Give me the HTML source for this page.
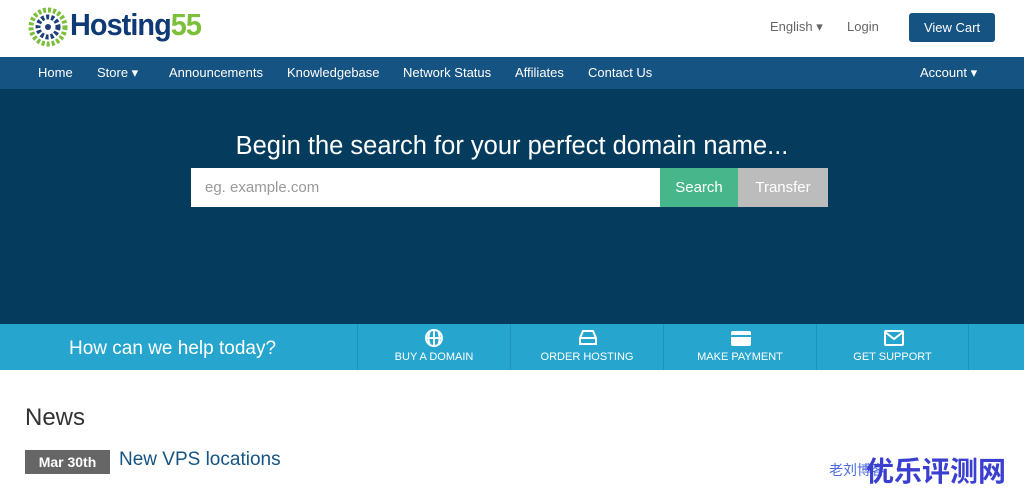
<!DOCTYPE html>
<html><head><meta charset="utf-8"><style>
*{margin:0;padding:0;box-sizing:border-box}
body{width:1024px;height:497px;overflow:hidden;background:#fff;font-family:"Liberation Sans",Arial,sans-serif;position:relative}
.top{height:57px;position:relative}
.nav{position:absolute;top:57px;left:0;width:1024px;height:32px;background:#155383;color:#fff;font-size:13px}
.nav span{position:absolute;top:8px}
.hero{position:absolute;top:89px;left:0;width:1024px;height:235px;background:#053c5e}
.help{position:absolute;top:324px;left:0;width:1024px;height:46px;background:#26a5ce;color:#fff}
.cell{position:absolute;top:0;height:46px;width:153px;border-left:1px solid #1e93ba;text-align:center;font-size:11px}
.cell .l{position:absolute;top:27px;width:100%}
.cell svg{position:absolute;top:4px;left:66px}
</style></head><body>
<div class="top">
<svg style="position:absolute;left:28px;top:7px" width="40" height="40" viewBox="0 0 40 40"><circle cx="20" cy="20" r="17" fill="none" stroke="#7bbf3c" stroke-width="5" stroke-dasharray="3 2"/><circle cx="20" cy="20" r="10" fill="none" stroke="#1d3f7a" stroke-width="5" stroke-dasharray="3 2"/><circle cx="20" cy="20" r="3" fill="#1d3f7a"/></svg>
<div style="position:absolute;left:70px;top:7px;font-size:31px;font-weight:bold;letter-spacing:-1px;color:#0f3a75;transform:scaleX(0.93);transform-origin:left">Hosting<span style="color:#7cbf3a">55</span></div>
<div style="position:absolute;left:770px;top:19px;font-size:13px;color:#666">English ▾</div>
<div style="position:absolute;left:847px;top:19px;font-size:13px;color:#666">Login</div>
<div style="position:absolute;left:909px;top:13px;width:86px;height:29px;background:#155383;border-radius:3px;color:#fff;font-size:13px;text-align:center;line-height:29px">View Cart</div>
</div>
<div class="nav"><span style="left:38px">Home</span><span style="left:97px">Store ▾</span><span style="left:169px">Announcements</span><span style="left:287px">Knowledgebase</span><span style="left:403px">Network Status</span><span style="left:515px">Affiliates</span><span style="left:588px">Contact Us</span><span style="left:920px">Account ▾</span></div>
<div class="hero">
<div style="position:absolute;top:43px;width:1024px;text-align:center;color:#fff;font-size:25.5px">Begin the search for your perfect domain name...</div>
<div style="position:absolute;left:191px;top:79px;width:469px;height:39px;background:#fff;color:#999;font-size:15px;padding:11px 14px">eg. example.com</div>
<div style="position:absolute;left:660px;top:79px;width:78px;height:39px;background:#47b68a;color:#fff;font-size:15px;text-align:center;line-height:39px">Search</div>
<div style="position:absolute;left:738px;top:79px;width:90px;height:39px;background:#bcbcbc;color:#fff;font-size:15px;text-align:center;line-height:39px">Transfer</div>
</div>
<div class="help">
<div style="position:absolute;left:69px;top:14px;font-size:19px">How can we help today?</div>
<div class="cell" style="left:357px"><svg width="20" height="20" viewBox="0 0 20 20" fill="none" stroke="#fff" stroke-width="2"><circle cx="10" cy="10" r="8"/><path d="M2 10h16M10 2v16M6 3c-2 4-2 10 0 14M14 3c2 4 2 10 0 14"/></svg><div class="l">BUY A DOMAIN</div></div>
<div class="cell" style="left:510px"><svg width="22" height="20" viewBox="0 0 22 20" fill="none" stroke="#fff" stroke-width="2"><path d="M3 10l3-7h10l3 7v6H3z M3 10h16"/></svg><div class="l">ORDER HOSTING</div></div>
<div class="cell" style="left:663px"><svg width="22" height="20" viewBox="0 0 22 20"><rect x="1" y="3" width="20" height="15" rx="2" fill="#fff"/><rect x="1" y="7" width="20" height="2" fill="#26a5ce"/></svg><div class="l">MAKE PAYMENT</div></div>
<div class="cell" style="left:816px;width:153px;border-right:1px solid #1e93ba"><svg width="22" height="20" viewBox="0 0 22 20" fill="none" stroke="#fff" stroke-width="2"><rect x="2" y="3" width="18" height="14" rx="1"/><path d="M2 4l9 7 9-7"/></svg><div class="l">GET SUPPORT</div></div>
</div>
<div style="position:absolute;left:25px;top:404px;font-size:24px;color:#333">News</div>
<div style="position:absolute;left:25px;top:450px;width:85px;height:24px;background:#666;color:#fff;font-weight:bold;font-size:14px;text-align:center;line-height:24px">Mar 30th</div>
<div style="position:absolute;left:119px;top:449px;font-size:19px;color:#155383">New VPS locations</div>
<div style="position:absolute;left:829px;top:460px;font-size:14px;color:#4a6ae0;font-family:'Liberation Sans','Noto Sans CJK SC',sans-serif">老刘博客</div>
<div style="position:absolute;left:866px;top:450px;font-size:28px;font-weight:bold;color:#3a3fd0;font-family:'Liberation Sans','Noto Sans CJK SC',sans-serif">优乐评测网</div>
</body></html>
